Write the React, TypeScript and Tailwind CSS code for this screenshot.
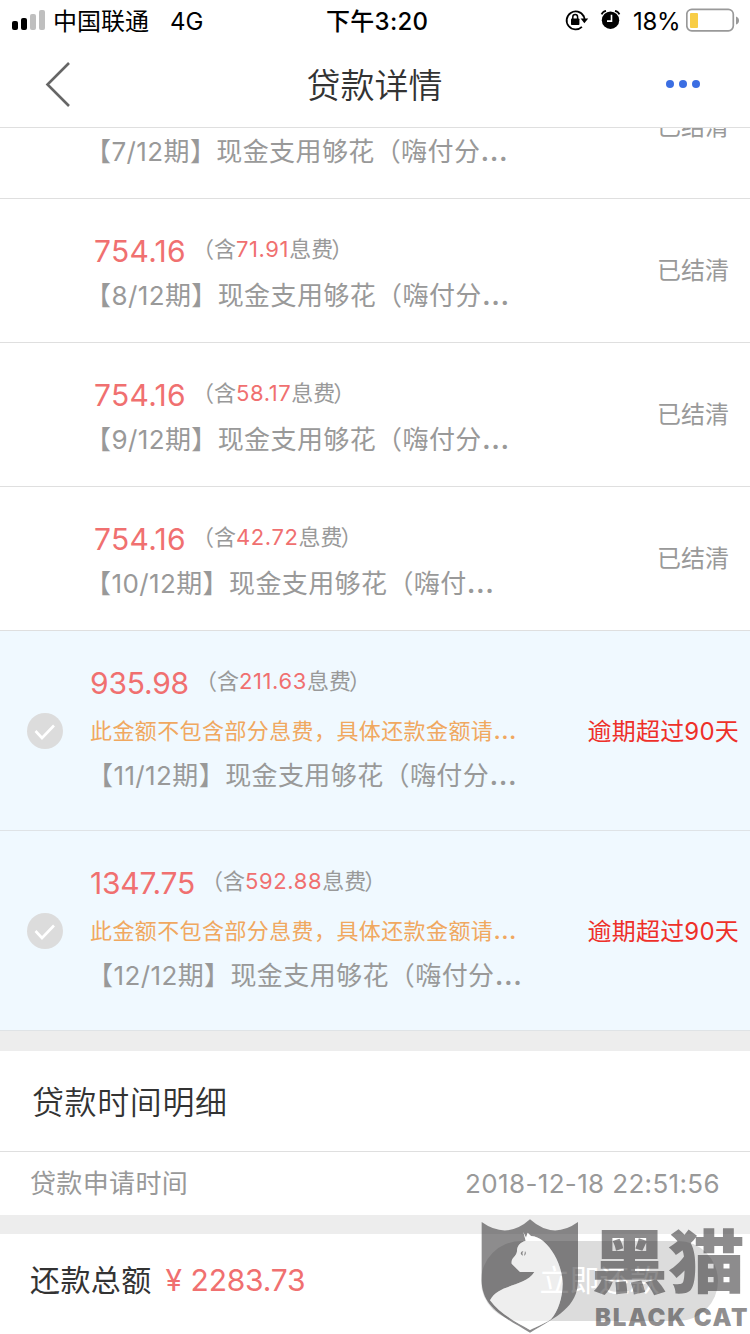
import { clsx } from "clsx";

type Installment = {
  amount?: string;
  fee?: string;
  title: string;
  status: string;
  overdue?: boolean;
};

const INSTALLMENTS: Installment[] = [
  { title: "【7/12期】现金支用够花（嗨付分", status: "已结清" },
  { amount: "754.16", fee: "71.91", title: "【8/12期】现金支用够花（嗨付分", status: "已结清" },
  { amount: "754.16", fee: "58.17", title: "【9/12期】现金支用够花（嗨付分", status: "已结清" },
  { amount: "754.16", fee: "42.72", title: "【10/12期】现金支用够花（嗨付", status: "已结清" },
  { amount: "935.98", fee: "211.63", title: "【11/12期】现金支用够花（嗨付分", status: "逾期超过90天", overdue: true },
  { amount: "1347.75", fee: "592.88", title: "【12/12期】现金支用够花（嗨付分", status: "逾期超过90天", overdue: true },
];

function StatusBar() {
  return (
    <div className="flex h-10 items-center text-2xl text-black">
      <svg className="ml-3" width="34" height="20" viewBox="0 0 34 20">
        <rect x="0" y="11" width="6" height="9" rx="2" />
        <rect x="9" y="8" width="6" height="12" rx="2" />
        <rect x="18" y="4" width="6" height="16" rx="2" fill="#bfbfbf" />
        <rect x="27" y="0" width="6" height="20" rx="2" fill="#bfbfbf" />
      </svg>
      <span className="ml-[7px] w-[117px] pt-[3px]">中国联通</span>
      <span className="w-[156px] pt-[3px]">4G</span>
      <span className="w-[239px] pt-[3px] font-medium tracking-[0.3px]">下午3:20</span>
      <svg width="24" height="22" viewBox="0 0 24 22">
        <path d="M18.6 7.2A9 9 0 1 0 16.9 17.9" fill="none" stroke="#000" strokeWidth="1.8" />
        <path d="M18.3 6.5Q19.6 8.4 19.6 11" fill="none" stroke="#000" strokeWidth="1.8" />
        <path d="M15.6 9.6h7.6l-3.8 4.6z" />
        <rect x="6" y="9.5" width="8.4" height="6.5" rx="0.8" />
        <path d="M7.8 10V7.9a2.4 2.4 0 0 1 4.8 0V10" fill="none" stroke="#000" strokeWidth="1.5" />
      </svg>
      <svg className="ml-[11px]" width="22" height="22" viewBox="0 0 22 22">
        <circle cx="10.5" cy="11.2" r="8.7" />
        <path d="M1.6 5.4Q2.6 2.6 6 1.8M19.4 5.4Q18.4 2.6 15 1.8" fill="none" stroke="#000" strokeWidth="1.8" />
        <path d="M11.5 5.8v6.3H7" fill="none" stroke="#fff" strokeWidth="1.6" />
      </svg>
      <span className="ml-[11px] w-[53px] pt-[3px] tracking-[-0.3px]">18%</span>
      <svg width="54" height="24" viewBox="0 0 54 24">
        <rect x="0.8" y="1.3" width="46.5" height="21.5" rx="5" fill="#fff" stroke="#999" strokeWidth="1.7" />
        <rect x="4" y="5" width="8" height="15" rx="1" fill="#f8cd46" />
        <path d="M50 8.5q3 1 3 4t-3 4z" fill="#999" />
      </svg>
    </div>
  );
}

function TitleBar() {
  return (
    <header className="flex h-22 items-center justify-between border-b border-[#dfdfdf]">
      <svg className="ml-[45px]" width="26" height="46" viewBox="0 0 26 46">
        <path d="M24 2L2.5 23.5 24 45" fill="none" stroke="#666" strokeWidth="2.6" />
      </svg>
      <h1 className="ml-3 pt-[3px] text-[34px] font-[350] text-[#333]">贷款详情</h1>
      <div className="mr-[50px] flex gap-[5px]">
        <span className="size-2 rounded-full bg-[#3b6ee2]" />
        <span className="size-2 rounded-full bg-[#3b6ee2]" />
        <span className="size-2 rounded-full bg-[#3b6ee2]" />
      </div>
    </header>
  );
}

function InstallmentRow({ item }: { item: Installment }) {
  return (
    <li
      className={clsx(
        "flex items-center border-b",
        item.overdue ? "h-[200px] border-[#dfe3e6] bg-[#f0f9ff]" : "h-36 border-[#dfdfdf]",
      )}
    >
      <div className={item.overdue ? "w-[90px] pl-[27px]" : "w-[94px]"}>
        {item.overdue && (
          <svg width="36" height="36" viewBox="0 0 36 36">
            <circle cx="18" cy="18" r="18" fill="#dcdcdc" />
            <path d="M8.5 18l6.5 7L27 12.5" fill="none" stroke="#fff" strokeWidth="2.6" />
          </svg>
        )}
      </div>
      <div className={clsx("flex-1 whitespace-nowrap text-[#999]", item.overdue && "pb-[7px]")}>
        <div className="flex h-[46px] items-center">
          {item.amount && (
            <>
              <span
                className={clsx(
                  "text-[30px] text-[#f07070]",
                  item.overdue ? "tracking-[-0.2px]" : "tracking-[0.3px]",
                )}
              >
                {item.amount}
              </span>
              <span className="-mt-1 ml-1.5 text-[22px]">
                （含<span className="tracking-[0.6px] text-[#f07070]">{item.fee}</span>息费
                <span className="-ml-0.5">）</span>
              </span>
            </>
          )}
        </div>
        {item.overdue && (
          <p className="h-[49px] text-[22px] leading-[48px] tracking-[0.4px] text-[#f0a860]">
            此金额不包含部分息费，具体还款金额请<span className="text-[27px] leading-none">…</span>
          </p>
        )}
        <p
          className={clsx(
            "h-[38px] text-[26px] tracking-[0.4px]",
            item.overdue ? "-ml-[3px] leading-[39px]" : "-ml-[9px] leading-[41px]",
          )}
        >
          {item.title}
          <span className="text-[32px] leading-none">…</span>
        </p>
      </div>
      <span
        className={clsx(
          "text-2xl",
          item.overdue ? "mr-[11px] pt-[3px] tracking-[0.2px] text-[#ee3029]" : "mr-[21px] text-[#999]",
        )}
      >
        {item.status}
      </span>
    </li>
  );
}

function Watermark() {
  return (
    <div className="absolute bottom-0 right-0 flex h-[122px] w-[275px] text-[#302e2f]/55">
      <svg className="shrink-0" width="110" height="122" viewBox="0 0 330 366">
        <path
          d="M20 30Q96 84 165 22Q234 84 309 30V205C309 285 245 315 165 362C85 315 20 285 20 205Z
            M145 60L153 77L158 62L168 72Q190 74 205 88C240 118 262 170 263 215C262 260 250 295 228 322C208 336 190 342 165 354C120 328 72 304 45 265C70 215 150 225 178 180H135L110 155C107 138 124 134 126 118C126 102 134 92 152 86Z"
          fill="currentColor"
          fillRule="evenodd"
        />
        <path
          d="M145 60L153 77L158 62L168 72Q190 74 205 88C240 118 262 170 263 215C262 260 250 295 228 322C208 336 190 342 165 354C120 328 72 304 45 265C70 215 150 225 178 180H135L110 155C107 138 124 134 126 118C126 102 134 92 152 86Z"
          fill="#fff"
          fillOpacity="0.5"
        />
        <path d="M137 124q2-7 8-6l-3 5 2 8q-6-1-7-7zM150 117q4 5 2 10l-5 5 2-8z" fill="currentColor" />
      </svg>
      <div className="ml-1.5 flex flex-col whitespace-nowrap pt-[17px]">
        <span className="h-[71px] origin-top scale-y-[0.9] text-[77px] font-black leading-[76px]">黑猫</span>
        <span className="ml-1 text-2xl font-black leading-[36px] tracking-[1.7px]">BLACK CAT</span>
      </div>
    </div>
  );
}

export default function App() {
  return (
    <div className="relative flex h-[1334px] w-[750px] flex-col overflow-hidden bg-white font-['Inter','Noto_Sans_CJK_SC',sans-serif]">
      <StatusBar />
      <TitleBar />

      <main className="h-[1106px] overflow-hidden bg-[#ededed]">
        <ul className="-mt-[73px] bg-white">
          {INSTALLMENTS.map((item) => (
            <InstallmentRow key={item.title} item={item} />
          ))}
        </ul>
        <section className="mt-5 bg-white">
          <h2 className="flex h-[101px] items-center border-b border-[#dfdfdf] pl-8 pt-1 text-[32px] font-[350] tracking-[0.6px] text-[#333]">
            贷款时间明细
          </h2>
          <div className="flex h-[63px] items-center justify-between px-[30px] text-[26px] tracking-[0.35px] text-[#999]">
            <span>贷款申请时间</span>
            <span>2018-12-18 22:51:56</span>
          </div>
        </section>
      </main>

      <footer className="flex h-[100px] items-center pb-[7px] pl-[30px] text-[30px]">
        <span className="tracking-[0.4px] text-[#333]">还款总额</span>
        <span className="ml-3.5 text-[#f07070]">
          ¥ <span className="tracking-[-0.2px]">2283.73</span>
        </span>
        <button className="ml-auto mr-8 h-20 w-[237px] rounded-full bg-[#dcdcdc] text-white">立即还款</button>
      </footer>

      <Watermark />
    </div>
  );
}
